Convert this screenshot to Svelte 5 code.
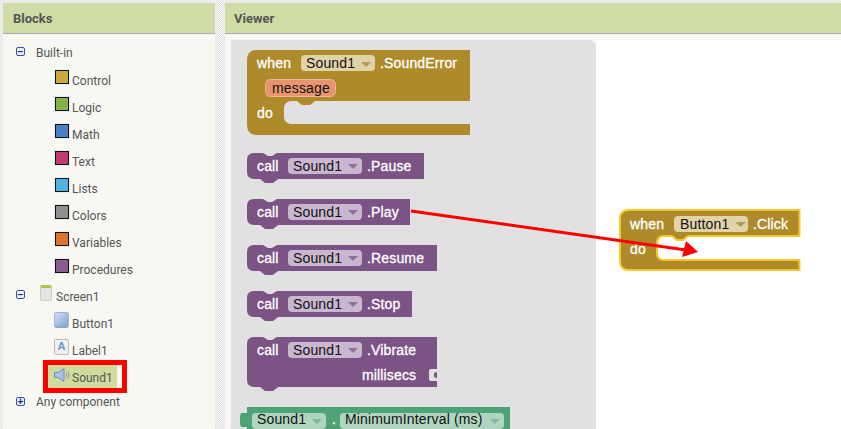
<script>
  const builtin = [
    { name: "Control", color: "#cca93f" },
    { name: "Logic", color: "#85b147" },
    { name: "Math", color: "#4a80c2" },
    { name: "Text", color: "#c23b6d" },
    { name: "Lists", color: "#4fb3dd" },
    { name: "Colors", color: "#8f8f8f" },
    { name: "Variables", color: "#dd7531" },
    { name: "Procedures", color: "#8a5d91" }
  ];

  // flyout call blocks: top y, right edge x, method name
  const calls = [
    { y: 153, right: 424, label: ".Pause" },
    { y: 199, right: 410, label: ".Play" },
    { y: 245, right: 437, label: ".Resume" },
    { y: 291, right: 412, label: ".Stop" }
  ];

  function callPath(y, right, h) {
    const b = y + h;
    return `M254 ${y} H263 l5 3 h4 l5 -3 H${right} V${b} H278 l-5 4 h-8 l-5 -4 H254 q-7 0 -7 -7 V${y + 7} q0 -7 7 -7 z`;
  }
</script>

<div class="page">
  <section class="blocks">
    <h2>Blocks</h2>
    <div class="tree">
      <div class="row top first">
        <span class="toggle">&minus;</span>
        <span>Built-in</span>
      </div>
      {#each builtin as item}
        <div class="row leaf">
          <span class="swatch" style="background: {item.color}"></span>
          <span class="label">{item.name}</span>
        </div>
      {/each}
      <div class="row top screen">
        <span class="toggle">&minus;</span>
        <span class="phone"></span>
        <span class="label">Screen1</span>
      </div>
      <div class="row leaf">
        <span class="btn-icon"></span>
        <span class="label">Button1</span>
      </div>
      <div class="row leaf">
        <span class="a-icon">A</span>
        <span class="label">Label1</span>
      </div>
      <div class="row selected">
        <span class="highlight">
          <svg width="17" height="14" viewBox="0 0 17 14">
            <path d="M0.500 4.500 H4 L10 0.500 V13.500 L4 9.500 H0.500 z" fill="#a9c3e4" stroke="#6f8fbd" stroke-width="1" />
            <path d="M12 4.500 q1.500 2.500 0 5 M13.800 3 q2.400 4 0 8" fill="none" stroke="#9a9a9a" stroke-width="1" />
          </svg>
          <span class="label">Sound1</span>
        </span>
        <span class="mark"></span>
      </div>
      <div class="row top any">
        <span class="toggle">+</span>
        <span>Any component</span>
      </div>
    </div>
  </section>

  <section class="viewer">
    <h2>Viewer</h2>
    <svg class="canvas" width="616" height="395" viewBox="225 34 616 395">
      <rect x="596" y="40" width="245" height="389" fill="#fff" />
      <path d="M231 40 H588 q8 0 8 8 V429 H231 z" fill="#e1e1e1" />

      <!-- SoundError event -->
      <path d="M257 50 H470 V101 H315 l-5 4 h-8 l-5 -4 H292 q-8 0 -8 8 V116 q0 8 8 8 H470 V135 H257 q-10 0 -10 -10 V60 q0 -10 10 -10 z" fill="#af8a2b" />
      <text class="w" x="257" y="68">when</text>
      <rect class="f-gold" x="301" y="55" width="74" height="16" rx="4" />
      <text class="k" x="306" y="68">Sound1</text>
      <path d="M361 62 h10 l-5 5 z" fill="#b09a5c" />
      <text class="w" x="380" y="68">.SoundError</text>
      <rect x="265.500" y="79.500" width="70" height="17" rx="5" fill="#e8956f" stroke="#f0b59a" />
      <text class="k" x="272" y="93">message</text>
      <text class="w" x="257" y="118">do</text>

      <!-- call blocks -->
      {#each calls as c}
        <path d={callPath(c.y, c.right, 26)} fill="#7c5385" />
        <text class="w" x="257" y={c.y + 18}>call</text>
        <rect class="f-purple" x="288" y={c.y + 5} width="74" height="16" rx="4" />
        <text class="k" x="293" y={c.y + 18}>Sound1</text>
        <path d="M348 {c.y + 11} h10 l-5 5 z" fill="#8f7297" />
        <text class="w" x="367" y={c.y + 18}>{c.label}</text>
      {/each}

      <!-- Vibrate -->
      <path d="{callPath(337, 437, 50)} M437 369 H431 q-2 0 -2 2 v8 q0 2 2 2 H437 V378 l-3 -1 v-4 l3 -1 z" fill="#7c5385" fill-rule="evenodd" />
      <text class="w" x="257" y="355">call</text>
      <rect class="f-purple" x="288" y="342" width="74" height="16" rx="4" />
      <text class="k" x="293" y="355">Sound1</text>
      <path d="M348 348 h10 l-5 5 z" fill="#8f7297" />
      <text class="w" x="367" y="355">.Vibrate</text>
      <text class="w" x="362" y="380">millisecs</text>

      <!-- MinimumInterval getter -->
      <path d="M247 407 H510 V429 H247 V427 h-6 l-1 -3 v-8 l1 -3 h6 z" fill="#4fa275" />
      <rect class="f-green" x="252" y="413" width="74" height="16" rx="4" />
      <text class="k" x="257" y="424">Sound1</text>
      <path d="M312 419 h10 l-5 5 z" fill="#7fb999" />
      <text class="w" x="332" y="424">.</text>
      <rect class="f-green" x="340" y="413" width="164" height="16" rx="4" />
      <text class="k" x="345" y="424">MinimumInterval (ms)</text>
      <path d="M490 419 h10 l-5 5 z" fill="#7fb999" />

      <!-- Button1.Click on the workspace -->
      <path d="M629 210 H799.500 V236 H688 l-5 4 h-6 l-5 -4 H664 q-7 0 -7 7 V253 q0 7 7 7 H799.500 V270 H629 q-9 0 -9 -9 V219 q0 -9 9 -9 z" fill="#af8a2b" stroke="#f9c72d" stroke-width="2" />
      <text class="w" x="630" y="229">when</text>
      <rect class="f-gold" x="674" y="216" width="74" height="16" rx="4" />
      <text class="k" x="680" y="229">Button1</text>
      <path d="M735 222 h11 l-5.500 5 z" fill="#b09a5c" />
      <text class="w" x="753" y="229">.Click</text>
      <text class="w" x="630" y="254">do</text>

      <!-- annotation arrow -->
      <line x1="411" y1="211" x2="686" y2="250" stroke="#f00" stroke-width="3" />
      <path d="M698 252 L686 241 L682 257 z" fill="#f00" />
    </svg>
  </section>
</div>

<style>
  :global(body) {
    margin: 0;
  }
  .page {
    width: 841px;
    height: 429px;
    overflow: hidden;
    display: flex;
    gap: 10px;
    box-sizing: border-box;
    padding: 3px 0 0 3px;
    background: repeating-conic-gradient(#e2e2e2 0 25%, #f4f4f4 0 50%) 0 0 / 2px 2px;
    font-family: "Roboto", "Liberation Sans", sans-serif;
  }
  h2 {
    margin: 0;
    height: 31px;
    box-sizing: border-box;
    padding-left: 10px;
    line-height: 31px;
    font-size: 13px;
    font-weight: 700;
    color: #555;
    background: #cfdca5;
    border-bottom: 1px solid #aaa;
  }
  .blocks {
    width: 212px;
    flex: none;
    background: #f8f8f3;
  }
  .viewer {
    flex: 1;
    min-width: 0;
    background: #f8f8f3;
  }
  .viewer h2 {
    padding-left: 9px;
  }
  .tree {
    padding-top: 5px;
    font-size: 12px;
    color: #555;
  }
  .row {
    display: flex;
    align-items: flex-start;
    height: 27px;
    box-sizing: border-box;
    line-height: 15px;
  }
  .top {
    padding: 7px 0 0 13px;
    gap: 11px;
  }
  .first {
    height: 24px;
  }
  .first .toggle {
    margin-top: 1px;
  }
  .leaf {
    padding: 6px 0 0 51px;
  }
  .label {
    margin-top: 5px;
    margin-left: 3px;
  }
  .toggle {
    width: 7px;
    height: 7px;
    border: 1px solid #3b4fa8;
    border-radius: 2px;
    font: 700 10px/7px "Liberation Sans", sans-serif;
    text-align: center;
    color: #1a2a8a;
    background: #eef0fa;
    flex: none;
  }
  .swatch {
    width: 12px;
    height: 12px;
    margin: 1px 0 1px 1px;
    border: 1px solid #111;
    outline: 1px solid #e3ecf7;
    flex: none;
  }
  .screen {
    padding-top: 6px;
    gap: 15px;
  }
  .screen .toggle {
    margin-top: 5px;
  }
  .phone {
    width: 12px;
    height: 16px;
    margin-right: -12px;
    box-sizing: border-box;
    border: 1px solid #ccc;
    border-top: 3px solid #a9c84c;
    border-radius: 2px;
    background: #e4e4e4;
    flex: none;
  }
  .screen .label {
    margin-left: 1px;
  }
  .btn-icon {
    width: 15px;
    height: 16px;
    box-sizing: border-box;
    border-radius: 3px;
    border: 1px solid #9fb4d0;
    border-bottom: 2px solid #8fa6c6;
    background: linear-gradient(135deg, #d2e0f2, #7fa3d6);
    flex: none;
  }
  .a-icon {
    width: 15px;
    height: 16px;
    box-sizing: border-box;
    border: 1px solid #bbb;
    border-radius: 2px;
    background: #f0f0f0;
    font: 700 11px/13px "Liberation Sans", sans-serif;
    text-align: center;
    color: #6f94cc;
    flex: none;
  }
  .selected {
    position: relative;
    padding: 5px 0 0 45px;
  }
  .highlight {
    display: flex;
    align-items: flex-start;
    width: 69px;
    height: 23px;
    padding: 3px 0 0 6px;
    box-sizing: border-box;
    background: #cfdc9e;
  }
  .highlight .label {
    margin-top: 3px;
    margin-left: 1px;
  }
  .mark {
    position: absolute;
    left: 40px;
    top: 0;
    width: 74px;
    height: 23px;
    border: 5px solid #f00;
  }
  .any {
    height: 20px;
    padding-top: 8px;
  }
  .any .toggle {
    margin-top: 2px;
  }
  .canvas {
    display: block;
    font-family: "Liberation Sans", Arial, sans-serif;
    font-size: 14px;
    letter-spacing: 0.15px;
  }
  .w {
    fill: #fff;
    stroke: #fff;
    stroke-width: 0.3px;
  }
  .k {
    fill: #111;
  }
  .f-gold {
    fill: #e1d3a8;
  }
  .f-purple {
    fill: #c9b6cf;
  }
  .f-green {
    fill: #afd5c1;
  }
</style>
